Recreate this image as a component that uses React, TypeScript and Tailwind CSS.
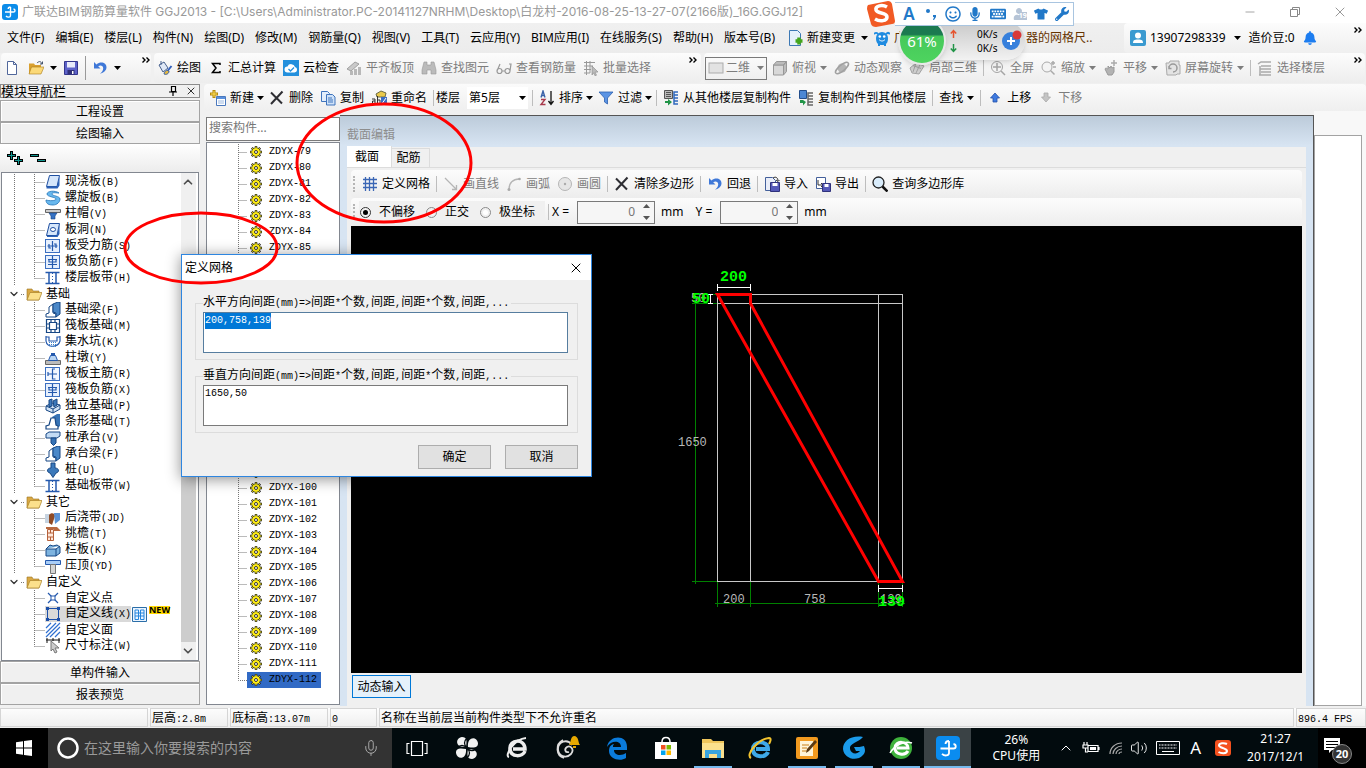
import React, { useEffect, useRef, useState } from 'react'
import type { ReactNode } from 'react'
import { clsx } from 'clsx'
import { Minus, X, ChevronDown, ChevronUp, Volume2, Mic } from 'lucide-react'
import { FaTshirt, FaWrench, FaMicrophone, FaRegSmile, FaUser, FaBell, FaKeyboard } from 'react-icons/fa'

const ICONS: Record<string, ReactNode> = {
  /* main toolbar */
  app: <><rect width="16" height="16" rx="3" fill="#0b8ce9" /><path d="M8.500 3v8.500c0 2-3 2.200-4.500.5M8.500 3C7 3 6.200 4 6.200 5M3 8h8.500c2 0 2-2.600 0-3" fill="none" stroke="#fff" strokeWidth="1.400" /></>,
  file: <path d="M3.500 1.500h6l3 3v10h-9zM9.500 1.500v3h3" fill="#fff" stroke="#51679b" />,
  open: <><path d="M1 3.500h5l1 1.500h6v9H1z" fill="#d9a02f" /><path d="M3.500 7H16l-3 7H1z" fill="#fbd978" stroke="#a97b18" strokeWidth=".6" /><path d="M9 3c2-2 4-2 5 1M14.500 1.500V4H12" fill="none" stroke="#44536b" /></>,
  save: <><path d="M1.500 1.500h13v13h-13z" fill="#5d62c9" stroke="#34368c" /><path d="M4 2h8v5.500H4z" fill="#e8ebfa" /><path d="M4.500 10h7v4.500h-7z" fill="#303078" /><path d="M9 11h1.500v3H9z" fill="#fff" /></>,
  undo: <path d="M2 2v6.500h6.500L6.200 6.200c2-1.500 5-.8 5 2 0 2.200-1.200 3.800-3.200 5.500 4-1 6.500-3.400 6.500-6.400C14.500 2.500 8.500 1 4.500 4.500z" fill="#3f78d8" />,
  draw: <><path d="m2 5 5-3 4 6-5 4z" fill="#dfe8f6" stroke="#47618e" /><path d="M4 1v4" stroke="#47618e" /><path d="m14.500 6-4 5" stroke="#315fbb" strokeWidth="2" /><path d="M7 14c1-4 3-4 5-3 0 3-3 4-5 3" fill="#e6b83e" stroke="#3e639f" /></>,
  sum: <path d="M12 5V3.500H4.500L8 8l-3.500 4.500H12V11" fill="none" stroke="#000" strokeWidth="1.500" />,
  cloud: <><rect width="16" height="16" fill="#2390dd" /><path d="M4.500 12.500a3 3 0 0 1 0-6 4 4 0 0 1 7.500.5 2.800 2.800 0 0 1-.5 5.500z" fill="#fff" /><path d="m5.500 9 2 2 3.500-3.500" fill="none" stroke="#2390dd" strokeWidth="1.300" /></>,
  align: <><path d="m1 9 8-7 4 2-8 7z" fill="#c9c9c9" stroke="#a0a0a0" /><path d="M4 11h3v4H4zM8 9h3v6H8zM12 7h3v8h-3z" fill="#b8b8b8" /></>,
  binoc: <path d="M3 2h3v3h4V2h3l2 8v4h-5v-4H6v4H1v-4z" fill="#bbb" stroke="#999" strokeWidth=".6" />,
  glasses: <path d="M1 11a2.500 2.500 0 1 0 5 0 2.500 2.500 0 1 0-5 0l3-7M9 11a2.500 2.500 0 1 0 5 0 2.500 2.500 0 1 0-5 0H6M14 11l1-7h-2" fill="none" stroke="#999" strokeWidth="1.200" />,
  batch: <><path d="M1 2.500h11M1 6h9M1 9.500h7M1 13h6M3.500 1v14M7 1v12" stroke="#999" /><path d="m9 6 6 6-3 .2 1.500 3-1.500.6-1.500-3L9 15z" fill="#bbb" stroke="#888" strokeWidth=".6" /></>,
  flat: <rect x="1" y="3" width="14" height="10" fill="#e2e2e2" stroke="#ababab" />,
  cube: <><path d="M1.500 5h10v10h-10z" fill="#d8d8d8" stroke="#989898" /><path d="m1.500 5 3-3.500h10L11.500 5zM14.500 1.500v10l-3 3.500V5z" fill="#bcbcbc" stroke="#989898" /></>,
  orbit: <><circle cx="8" cy="8" r="4.500" fill="#b5b5b5" /><ellipse cx="8" cy="8" rx="8" ry="3" transform="rotate(-40 8 8)" fill="none" stroke="#a0a0a0" strokeWidth="1.500" /></>,
  part3d: <path d="m1 8 6-5 8 3-5 8-7-1zM4 5.500l8 3M7 3l-3 9M11 4.500 7 13" fill="#d0d0d0" stroke="#a3a3a3" />,
  full: <><circle cx="7" cy="7" r="5.500" fill="#f4f4f4" stroke="#a5a5a5" /><path d="M7 3v8M3 7h8m0 4 4 4" stroke="#a5a5a5" strokeWidth="1.500" /></>,
  zoom: <><circle cx="6" cy="7" r="5" fill="#f4f4f4" stroke="#aaa" /><path d="m9.500 10.500 4 4M12 1v4m-2-2h4M12 7h3" stroke="#aaa" strokeWidth="1.500" /></>,
  pan: <><path d="M2 9c1-2 2 0 3 0V6l2 2 1-2 1 2 2-1v5l-2 3H5z" fill="#b3b3b3" stroke="#999" /><path d="M11 0v6M8 3h6" stroke="#aaa" strokeWidth="1.500" /></>,
  spin: <><path d="M1 3h3l1-2h9v4h1v9h-3l-1 1H2z" fill="#e3e3e3" stroke="#aaa" /><path d="M4 8a4 4 0 1 1 4 4m-4-6v2.500h2.500" fill="none" stroke="#999" strokeWidth="1.500" /></>,
  floors: <path d="m1 4 3-2h10M4 6h10M3 9h11M4 12h10M2 15h12M3 6v9" fill="none" stroke="#aaa" strokeWidth="1.500" />,
  change: <><path d="M2.500 .5h8l3 3v12h-11z" fill="#e5f1fb" stroke="#3c78b4" /><path d="M12 7.500v7M8.500 11h7" stroke="#43a51c" strokeWidth="3.500" /></>,
  mascot: <><path d="M2 8a6 6 0 0 1 12 0c0 5-2 7-6 7S2 13 2 8" fill="#1f8be0" /><path d="M0 4c2-2 3-1 4 0M16 4c-2-2-3-1-4 0M5 14v2M11 14v2" stroke="#1f8be0" strokeWidth="2" fill="none" /><circle cx="5.800" cy="6.500" r="1.300" fill="#fff" /><circle cx="10.200" cy="6.500" r="1.300" fill="#fff" /><path d="M5 9.500c2 2 4 2 6 0" stroke="#fff" fill="none" /></>,
  account: <><rect width="16" height="16" rx="2" fill="#3a9ad0" /><path d="M8 9.500c-4 0-5 1-5 3.500h10c0-2.500-1-3.500-5-3.500" fill="#fff" /><circle cx="8" cy="5.500" r="3" fill="#fff" /></>,
  /* component toolbar */
  create: <><path d="M6.500 6.500h9v9h-9z" fill="#fff" stroke="#4a78bd" /><path d="M7 7h8v2H7z" fill="#5b91dd" /><path d="M8 11h6M8 13h6" stroke="#9ab8e0" /><path d="M4 0v8M0 4h8" stroke="#b58b10" strokeWidth="3" /><path d="M4 1v6M1 4h6" stroke="#ffe15a" /></>,
  remove: <path d="m2 2.500 11 11M13.500 1.500 2 14" stroke="#2e2e33" strokeWidth="2" />,
  copy: <><path d="M1.500 1.500h6l2 2v8h-8z" fill="#e3eefb" stroke="#3f74bd" /><path d="M6.500 4.500h6l2.500 2.500v8H6.500zM8 8h4M8 10h5M8 12h5" fill="#cfe2f8" stroke="#3f74bd" /></>,
  rename: <><path d="m5 4 5-3 5 2-1 4H6z" fill="#e9c94c" stroke="#6c6a45" /><path d="M1 9h3v5H1.500v-3H4M6.500 6v8h2.500v-4H6.500" fill="none" stroke="#333" /><path d="M10 7h6v8h-6z" fill="#3b6cc4" /><path d="m10 15 5-7" stroke="#fff" /></>,
  sort: <><path d="M2 7.500 4 1l2 6.500M2.500 5.500h3" fill="none" stroke="#3a62a8" strokeWidth="1.400" /><path d="M2 9.500h4L2 14.500h4.500" fill="none" stroke="#a83a4c" strokeWidth="1.400" /><path d="M12 1v13m-2.500-3 2.500 3.500 2.500-3.500" fill="none" stroke="#111" strokeWidth="1.300" /></>,
  filter: <path d="M1 2h14l-5.500 6v6l-3-2V8z" fill="#5b94e4" stroke="#2c5fae" strokeWidth=".8" />,
  fromFloor: <><path d="M1.500 .5h8v8h-8zM3 2.500h5M3 4.500h5M3 6.500h5" fill="#bbb" stroke="#555" /><path d="M15 2h-4v12h4M11 5h4M11 8h4M11 11h4" fill="none" stroke="#2f68bd" strokeWidth="1.500" /><path d="M2 11h3V9l4 3-4 3.500V13H2z" fill="#219447" /></>,
  toFloor: <><path d="M1.500 .5h7v8h-7z" fill="#4c87d4" stroke="#234e8c" /><path d="M15 3h-5v12h5M10 6h5M10 9h5M10 12h5" fill="none" stroke="#666" strokeWidth="1.500" /><path d="M2 10h3l3 2-3 3.500V13H2z" fill="#219447" /></>,
  up: <path d="m8 3 4.500 5H10v4H6V8H3.500z" fill="#3f7be0" stroke="#2350a8" strokeWidth=".8" />,
  down: <path d="m8 12 4.500-5H10V3H6v4H3.500z" fill="#c4c4c4" stroke="#aaa" strokeWidth=".8" />,
  /* section editor */
  grid: <path d="M3.500 1v14M7.500 1v14M11.500 1v14M1 3.500h14M1 7.500h14M1 11.500h14" stroke="#3a66b5" strokeWidth="1.300" />,
  line: <path d="m2 2 11 11M13.500 9v4.500H9" fill="none" stroke="#b5b5b5" strokeWidth="1.300" />,
  arc: <><path d="M3 13C3 7 7 3 13 3" fill="none" stroke="#b5b5b5" strokeWidth="1.300" /><circle cx="3" cy="13.500" r="1.500" fill="#aaa" /><circle cx="13.500" cy="3" r="1.300" fill="#aaa" /></>,
  circle: <><circle cx="8" cy="8" r="6.500" fill="#e6e6e6" stroke="#b5b5b5" /><circle cx="8" cy="8" r="1.200" fill="#aaa" /></>,
  import: <><path d="M1.500 1.500h7l3 3v10h-10z" fill="#e9edf8" stroke="#44609b" /><path d="M6.500 6.500h9v9h-9z" fill="#5559b8" stroke="#30327c" /><path d="M8.500 7h5v3h-5z" fill="#fff" /><path d="M9 2c3-2 5 0 5 3m-2-1 2 1.500L15.500 4" fill="none" stroke="#333" /></>,
  export: <><path d="M1.500 1.500h9v11h-9z" fill="#fff" stroke="#44609b" /><path d="M3 4v5h5m-2-2 2 2-2 2" fill="none" stroke="#333" /><path d="M7.500 7.500h8v8h-8z" fill="#5559b8" stroke="#30327c" /><path d="M9.500 8h4v3h-4z" fill="#fff" /></>,
  search: <><circle cx="6.500" cy="6.500" r="5.500" fill="#d9ecfb" stroke="#222" strokeWidth="1.300" /><path d="m10.500 10.500 5 5" stroke="#111" strokeWidth="2.500" /></>,
  /* navigation tree */
  folder: <><path d="M1 3h5l1 2h6v9H1z" fill="#d9a844" stroke="#9c7420" strokeWidth=".6" /><path d="M4 6.500h12l-3 7.500H1z" fill="#fbe08c" stroke="#a98128" strokeWidth=".7" /></>,
  slab: <><path d="M4.500 1.500h10l-2.500 11H1.500z" fill="#d5e6fb" stroke="#1f4fa0" /><path d="M1.500 12.500h10.500l2.500-10v9l-2 3h-11z" fill="#2c62b8" /></>,
  spiral: <path d="M14 3C10 0 2 1 2 4s9 3 9 5-7 2-10 1c0 4 3 5 7 5s7-3 7-6-8-3-8-5 4-1 7-1z" fill="#68b8ee" stroke="#2374b8" strokeWidth=".8" />,
  cap: <><path d="M.5 3.500h15v3H.5z" fill="#ccc" stroke="#666" /><path d="M4 7h8l-2 3v3H6v-3z" fill="#3572c4" stroke="#1a4585" strokeWidth=".6" /></>,
  hole: <><path d="M4.500 1.500h10l-2.500 12H1.500z" fill="#d5e6fb" stroke="#1f4fa0" /><ellipse cx="8" cy="7.500" rx="2.500" ry="2" fill="#fff" stroke="#1f4fa0" /><path d="m2 14 10-.5 2.500-11V12l-2 3H2z" fill="#2c62b8" /></>,
  rebar: <><rect x=".5" y="1.500" width="14" height="13" fill="#e7f0fd" stroke="#3c6fc0" /><path d="M7.500 3v10M2.500 8h10M4 6v4h2M11 10V6H9" fill="none" stroke="#2459ad" strokeWidth="1.200" /></>,
  negbar: <><rect x=".5" y="1.500" width="14" height="13" fill="#e7f0fd" stroke="#3c6fc0" /><path d="M7.500 2v12M3 5.500h9M3 10.500h9M4 5v3h7V5" fill="none" stroke="#2459ad" strokeWidth="1.200" /></>,
  band: <><path d="M.5 2.500h14M.5 13.500h14M4 3v10M11 3v10" stroke="#2459ad" strokeWidth="1.500" /><path d="M7.500 3v10" stroke="#2459ad" strokeDasharray="1 2" /></>,
  beam: <><path d="M1 15v-3l3-1V5l4-3v9l3 1v3z" fill="#fff" stroke="#174784" /><path d="m8 2 5-2h2v12l-4 3v-4l-3-1z" fill="#4b88c8" stroke="#174784" /></>,
  raft: <path d="M1.500 1.500h13v13h-13zM4.500 4.500h7v7h-7zM1 6h3M1 10h3M12 6h3M12 10h3M6 1v3M10 1v3M6 12v3M10 12v3" fill="none" stroke="#174784" strokeWidth="1.200" />,
  pit: <><path d="M1 2v5c1 7 12 7 14 0V2M1 3h3v4h8V3h3" fill="none" stroke="#2459ad" strokeWidth="1.200" /><path d="M4 8.500h8M4 10.500h8M6 12.500h5" stroke="#3b82cb" strokeDasharray="1 1" /></>,
  pier: <><path d="M.5 10.500h15v4H.5z" fill="#bbb" stroke="#666" /><path d="M5.500 5.500h5l2 5h-9z" fill="#b9d5f3" stroke="#2459ad" /><path d="M6 3h4v2H6z" fill="#2459ad" /></>,
  mainbar: <><rect x=".5" y="1.500" width="14" height="13" fill="#f2f7ff" stroke="#3c6fc0" /><path d="M7.500 3v10h3M3 8h9M3 6v4M7 3h3" fill="none" stroke="#2459ad" strokeWidth="1.200" /></>,
  isolated: <><path d="m1 8 6-3 8 2v4l-7 4-7-3z" fill="#cfe1f4" stroke="#174784" /><path d="m4 2 3-1v7l-3 1zM8 3l4-2v6L9 9z" fill="#3c79bb" stroke="#174784" /><path d="m1 8 7 3 7-4M8 11v4" fill="none" stroke="#174784" /></>,
  strip: <><path d="M7 3 12 0h3v12l-4 3z" fill="#3773b5" /><path d="M1 15v-3l3-1 2-7h4l1 7 2 1v3z" fill="#fff" stroke="#174784" strokeWidth="1.200" /></>,
  pilecap: <><path d="m1 4 3-2h11v4l-3 2H1z" fill="#c3dbf4" stroke="#174784" /><path d="M6 8h5v5l-2.500 2.500L6 13z" fill="#3773b5" stroke="#174784" /></>,
  pile: <path d="M6 1h4v5c4 0 5 4 1 5l-3 4.500L5 11C1 10 2 6 6 6z" fill="#3b78ba" stroke="#174784" />,
  postcast: <><path d="M0 4h5v9H0z" fill="#c6d3e0" /><path d="M4 5c2-3 6-2 6 1l-3 9-3-2z" fill="#8f4a24" /><path d="M9 3h6v7l-5 4z" fill="#5b92d4" /></>,
  eave: <><path d="M2.500 3.500h6v11h-6zM2 7h7M2 11h7M5.500 3v4M5.500 11v4" fill="#ffe8da" stroke="#b5603a" /><path d="M1 1h11l4 4H9V3H1z" fill="#b9693f" /></>,
  parapet: <path d="m1 7 4-4 3 1 4-1 3 2v6l-4 3H1z M1 7h10l4-3M11 7v7" fill="#7db3df" stroke="#174784" />,
  coping: <><path d="M.5 2.500h15v4H.5z" fill="#a9cdf7" stroke="#2459ad" /><path d="M5.500 6.500h5v9h-5z" fill="#d5d5d5" stroke="#777" /></>,
  point: <><path d="m3 3 10 10M13 3 3 13" stroke="#2459ad" strokeWidth="1.200" /><rect x="6" y="6" width="4" height="4" fill="#fff" stroke="#2459ad" /></>,
  polyline: <><path d="M2.500 2.500h11v11h-11z" fill="none" stroke="#1c4fa8" /><path d="M1 1h3v3H1zM12 1h3v3h-3zM1 12h3v3H1zM12 12h3v3h-3z" fill="#1c4fa8" /></>,
  face: <path d="m1 6 5-5M1 11 11 1M1 15 15 1M5 15 15 5M10 15l5-5" stroke="#2f6fd0" strokeWidth="1.200" />,
  dimension: <><path d="M1 2h14M2 0v5M8 0v3M14 0v5" stroke="#111" /><path d="m6 3 8 7h-4l2 4-2 1-2-4-2 2z" fill="#ccc" stroke="#777" /></>,
  gear: <><path d="M8 2v12M2 8h12M3.800 3.800l8.400 8.400M12.200 3.800l-8.400 8.400" stroke="#222" strokeWidth="2.400" /><circle cx="8" cy="8" r="4.200" fill="#ffee10" stroke="#333" strokeWidth=".7" /><path d="M8 2.500v11M2.500 8h11M4.200 4.200l7.600 7.600M11.800 4.200l-7.600 7.600" stroke="#ffee10" /><circle cx="8" cy="8" r="1.500" fill="#fff" stroke="#222" strokeWidth=".9" /></>,
}

const Icon = ({ name, className = 'size-4' }: { name: string; className?: string }) => (
  <svg viewBox="0 0 16 16" className={clsx('shrink-0', className)} aria-hidden="true">{ICONS[name]}</svg>
)

const Arrow = ({ className }: { className?: string }) => (
  <svg viewBox="0 0 7 4" className={clsx('h-1 w-[7px] shrink-0', className)} aria-hidden="true"><path d="M0 0h7L3.500 4z" fill="currentColor" /></svg>
)

const Sep = () => <span className="-mx-px h-4 w-px shrink-0 bg-[#bdbdbd]" />

const Grip = () => <span className="h-4 w-0.5 shrink-0 border-l-2 border-dotted border-[#b5b5b5]" />

// Latin runs are half as wide as a full-width glyph
const Song = ({ text }: { text: string }) => (
  <>
    {text.split(/([\x20-\x7e]+)/).filter(Boolean).map((part, i) => (
      <span key={i} className={/^[\x20-\x7e]/.test(part) ? "font-['Liberation_Mono',monospace] text-[10px]" : undefined}>{part}</span>
    ))}
  </>
)

type ToolProps = { icon?: string; label: string; disabled?: boolean; arrow?: boolean; tight?: boolean }

const Tool = ({ icon, label, disabled, arrow, tight }: ToolProps) => (
  <button type="button" disabled={disabled} className={clsx('flex shrink-0 items-center gap-1 whitespace-nowrap', disabled && 'text-[#7d7d7d]')}>
    {icon && <Icon name={icon} />}
    {label}
    {arrow && <Arrow className={clsx(tight && '-mr-0.5 -ml-px')} />}
  </button>
)

const More = ({ className }: { className?: string }) => (
  <button type="button" aria-label="更多" className={clsx('shrink-0 self-start pt-1', className)}>
    <svg viewBox="0 0 8 6" className="h-1.5 w-2"><path d="m.5 .5 2.500 2.500L.5 5.500M4.500 .5 7 3 4.500 5.500" fill="none" stroke="#000" strokeWidth="1.400" /></svg>
  </button>
)

const MENUS = ['文件(F)', '编辑(E)', '楼层(L)', '构件(N)', '绘图(D)', '修改(M)', '钢筋量(Q)', '视图(V)', '工具(T)', '云应用(Y)', 'BIM应用(I)', '在线服务(S)', '帮助(H)', '版本号(B)']

const TitleBar = () => (
  <header className="flex h-[23px] items-center bg-white pr-1 pl-0.5 text-[#999]">
    <Icon name="app" />
    <h1 className="ml-1 font-[Inter,'Noto_Sans_CJK_SC',sans-serif] whitespace-nowrap">广联达BIM钢筋算量软件 GGJ2013 - [C:\Users\Administrator.PC-20141127NRHM\Desktop\白龙村-2016-08-25-13-27-07(2166版)_16G.GGJ12]</h1>
    <div className="ml-auto flex">
      <button type="button" aria-label="最小化" className="flex w-[45px] items-center justify-center"><Minus className="size-3.5" strokeWidth={1.5} /></button>
      <button type="button" aria-label="还原" className="flex w-[45px] items-center justify-center">
        <svg viewBox="0 0 12 12" className="size-3"><path d="M1.500 3.500h7v7h-7zM3.500 3V1.500h7v7H9" fill="none" stroke="#888" /></svg>
      </button>
      <button type="button" aria-label="关闭" className="flex w-[45px] items-center justify-center"><X className="size-4" strokeWidth={1.5} /></button>
    </div>
  </header>
)

const MenuBar = () => (
  <nav className="flex h-[30px] items-center bg-gradient-to-b from-[#f0f0f0] to-[#ececec]">
    <div className="flex items-center gap-[11px] pl-[7px]">
      {MENUS.map((m) => <button key={m} type="button" className="whitespace-nowrap">{m}</button>)}
    </div>
    <div className="ml-3 flex items-center gap-1 whitespace-nowrap">
      <Icon name="change" />
      <button type="button" className="flex items-center gap-1.5">新建变更 <Arrow /></button>
    </div>
    <a href="#news" className="ml-1.5 flex items-center whitespace-nowrap text-[#663300]">
      <Icon name="mascot" />
      <span className="ml-1 w-[132px]">广</span>
      <span>器的网格尺..</span>
    </a>
    <div className="ml-auto flex h-full w-[242px] shrink-0 items-center rounded-l bg-gradient-to-b from-[#fcfcfc] to-[#efefef] pl-1.5">
      <Icon name="account" />
      <button type="button" className="ml-1 flex items-center gap-2">13907298339 <Arrow /></button>
      <span className="ml-2">造价豆:0</span>
      <button type="button" aria-label="通知" className="ml-2"><FaBell className="size-3.5 text-[#1d7df0]" /></button>
      <More className="mr-1 ml-auto" />
    </div>
  </nav>
)

const MainToolbar = () => (
  <div className="flex h-[30px] gap-[3px] px-px text-black">
    <div className="flex w-[150px] shrink-0 items-center rounded bg-gradient-to-b from-[#fcfcfc] to-[#ededed] pl-[3px]">
      <button type="button" aria-label="新建"><Icon name="file" /></button>
      <button type="button" aria-label="打开" className="ml-2 flex items-center gap-1.5"><Icon name="open" /><Arrow /></button>
      <button type="button" aria-label="保存" className="ml-1.5"><Icon name="save" /></button>
      <span className="mx-1.5 h-6 w-px bg-[#999]" />
      <button type="button" aria-label="撤销" className="flex items-center gap-1.5"><Icon name="undo" /><Arrow /></button>
      <More className="mr-px ml-auto" />
    </div>
    <div className="flex w-[547px] shrink-0 items-center gap-[7px] rounded bg-gradient-to-b from-[#fcfcfc] to-[#ededed] pl-[3px]">
      <Tool icon="draw" label="绘图" />
      <Tool icon="sum" label="汇总计算" />
      <Tool icon="cloud" label="云检查" />
      <Tool icon="align" label="平齐板顶" disabled />
      <Tool icon="binoc" label="查找图元" disabled />
      <Tool icon="glasses" label="查看钢筋量" disabled />
      <Tool icon="batch" label="批量选择" disabled />
      <More className="mr-1 ml-auto" />
    </div>
    <div className="flex min-w-0 grow items-center gap-[7px] rounded bg-gradient-to-b from-[#fcfcfc] to-[#ededed] pl-px">
      <label className="-mr-0.5 flex h-[23px] w-[62px] shrink-0 items-center border border-[#7a7a7a] px-0.5 text-[#7d7d7d]">
        <Icon name="flat" />
        <select aria-label="视图模式" disabled className="ml-0.5 w-7 appearance-none opacity-100"><option>二维</option></select>
        <Arrow className="ml-auto" />
      </label>
      <Tool icon="cube" label="俯视" disabled arrow />
      <Tool icon="orbit" label="动态观察" disabled />
      <Tool icon="part3d" label="局部三维" disabled />
      <Sep />
      <Tool icon="full" label="全屏" disabled />
      <Tool icon="zoom" label="缩放" disabled arrow />
      <Tool icon="pan" label="平移" disabled arrow />
      <Tool icon="spin" label="屏幕旋转" disabled arrow />
      <Sep />
      <Tool icon="floors" label="选择楼层" disabled />
      <More className="mr-[3px] ml-auto" />
    </div>
  </div>
)

const ComponentToolbar = () => (
  <div className="flex h-[27px] items-center gap-[7px] rounded bg-gradient-to-b from-[#fbfbfb] to-[#efefef] pl-1.5">
    <Tool icon="create" label="新建" arrow tight />
    <Tool icon="remove" label="删除" />
    <Tool icon="copy" label="复制" />
    <Tool icon="rename" label="重命名" />
    <Sep />
    <label htmlFor="floor" className="-ml-1 shrink-0">楼层</label>
    <div className="-mr-0.5 flex h-[22px] w-[61px] shrink-0 items-center bg-white px-0.5">
      <select id="floor" className="w-12 appearance-none"><option>第5层</option></select>
      <Arrow className="ml-auto" />
    </div>
    <Sep />
    <Tool icon="sort" label="排序" arrow tight />
    <Tool icon="filter" label="过滤" arrow tight />
    <Sep />
    <Tool icon="fromFloor" label="从其他楼层复制构件" />
    <Tool icon="toFloor" label="复制构件到其他楼层" />
    <Sep />
    <Tool label="查找" arrow />
    <Sep />
    <Tool icon="up" label="上移" />
    <Tool icon="down" label="下移" disabled />
  </div>
)

const TREE: { title?: string; items: [string, string][] }[] = [
  { items: [['slab', '现浇板(B)'], ['spiral', '螺旋板(B)'], ['cap', '柱帽(V)'], ['hole', '板洞(N)'], ['rebar', '板受力筋(S)'], ['negbar', '板负筋(F)'], ['band', '楼层板带(H)']] },
  { title: '基础', items: [['beam', '基础梁(F)'], ['raft', '筏板基础(M)'], ['pit', '集水坑(K)'], ['pier', '柱墩(Y)'], ['mainbar', '筏板主筋(R)'], ['negbar', '筏板负筋(X)'], ['isolated', '独立基础(P)'], ['strip', '条形基础(T)'], ['pilecap', '桩承台(V)'], ['beam', '承台梁(F)'], ['pile', '桩(U)'], ['band', '基础板带(W)']] },
  { title: '其它', items: [['postcast', '后浇带(JD)'], ['eave', '挑檐(T)'], ['parapet', '栏板(K)'], ['coping', '压顶(YD)']] },
  { title: '自定义', items: [['point', '自定义点'], ['polyline', '自定义线(X)'], ['face', '自定义面'], ['dimension', '尺寸标注(W)']] },
]

const PanelButton = ({ label }: { label: string }) => (
  <button type="button" className="h-[22px] w-full border border-[#a3a3a3] bg-[#f0f0f0] pt-0.5 leading-4 shadow-[inset_1px_1px_0_#fff]">{label}</button>
)

const Navigator = () => (
  <aside className="flex w-[200px] shrink-0 flex-col pb-px">
    <div className="mb-0.5 flex h-3.5 items-center border border-[#8b8b8b] text-[13px] leading-3">
      <h2>模块导航栏</h2>
      <button type="button" aria-label="固定" className="ml-auto">
        <svg viewBox="0 0 8 10" className="h-2.5 w-2"><path d="M2.500 .5h4v5h-4zM0 6h8M4 6v4" fill="none" stroke="#000" strokeWidth="1.200" /></svg>
      </button>
      <button type="button" aria-label="关闭" className="mr-0.5 ml-2"><X className="size-3" strokeWidth={1.6} /></button>
    </div>
    <PanelButton label="工程设置" />
    <PanelButton label="绘图输入" />
    <div className="flex h-7 items-center bg-gradient-to-b from-white to-[#ececec] pl-[7px]">
      <button type="button" aria-label="全部展开">
        <svg viewBox="0 0 16 14" className="h-3.5 w-4"><path d="M4.500 0v9M0 4.500h9M11.500 5v9M7 9.500h9" stroke="#000" strokeWidth="3" /><path d="M4.500 1v7M1 4.500h7M11.500 6v7M8 9.500h7" stroke="#11958f" /></svg>
      </button>
      <button type="button" aria-label="全部折叠" className="ml-[7px]">
        <svg viewBox="0 0 16 14" className="h-3.5 w-4"><path d="M0 4.500h9M7 9.500h9" stroke="#000" strokeWidth="3" /><path d="M1 4.500h7M8 9.500h7" stroke="#11958f" /></svg>
      </button>
    </div>
    <div className="mx-px flex grow border border-[#828790] bg-white">
      <ul className="grow pt-px">
        {TREE.map((group, g) => (
          <React.Fragment key={g}>
            {group.title && (
              <li className="flex h-4 items-center pl-1.5 leading-4">
                <ChevronDown className="size-3 text-[#333]" strokeWidth={2.5} />
                <span className="mr-0.5 ml-px w-[3px] border-t border-dotted border-[#777]" />
                <Icon name="folder" />
                <span className="ml-1">{group.title}</span>
              </li>
            )}
            {group.items.map(([icon, label], i) => (
              <li key={label} className="flex h-4 items-center leading-4">
                <svg viewBox="0 0 43 16" className="h-4 w-[43px] shrink-0" aria-hidden="true">
                  <path
                    d={clsx(g < TREE.length - 1 && 'M12.500 0V16', i < group.items.length - 1 ? 'M32.500 0V16' : 'M32.500 0V8.500', 'M32.500 8.500H43')}
                    fill="none" stroke="#777" strokeDasharray="1 1"
                  />
                </svg>
                <span className={clsx('flex h-4 items-center whitespace-nowrap', label === '自定义线(X)' && 'bg-[#d9d9d9]')}>
                  <Icon name={icon} />
                  <span className="ml-1"><Song text={label} /></span>
                </span>
                {label === '自定义线(X)' && (
                  <>
                    <svg viewBox="0 0 15 15" className="ml-px size-[15px]" aria-hidden="true"><path d="M.5 .5h14v14H.5z" fill="#eaf4ff" stroke="#2b6ea8" /><path d="M3 3h3.500v9.500H3zM8.500 3H12v9.500H8.500zM3 6h9M3 9h9" fill="none" stroke="#2585dd" /></svg>
                    <span className="ml-0.5 self-start bg-[#ffd800] text-[9px] leading-2 font-bold">NEW</span>
                  </>
                )}
              </li>
            ))}
          </React.Fragment>
        ))}
      </ul>
      <div className="mr-0.5 flex w-[15px] shrink-0 flex-col bg-[#f0f0f0] text-[#505050]">
        <ChevronUp className="mt-0.5 size-3.5" strokeWidth={3} />
        <span className="mt-24 grow bg-[#cdcdcd]" />
        <ChevronDown className="my-0.5 size-3.5" strokeWidth={3} />
      </div>
    </div>
    <PanelButton label="单构件输入" />
    <PanelButton label="报表预览" />
  </aside>
)

const COMPONENTS = Array.from({ length: 34 }, (_, i) => `ZDYX-${79 + i}`)

const ComponentList = () => (
  <div className="flex w-[134px] shrink-0 flex-col pt-1.5 pb-px">
    <input aria-label="搜索构件" placeholder="搜索构件..." className="h-6 w-full border border-[#7a7a7a] bg-white px-0.5 pb-1 placeholder:text-[#777]" />
    <ul className="mt-px grow border border-[#828790] bg-white pt-px font-['Liberation_Mono',monospace] text-[10px]">
      {COMPONENTS.map((name, i) => (
        <li key={name} className="flex h-4 items-center pl-[31px] leading-4">
          <svg viewBox="0 0 9 16" className="h-4 w-[9px]" aria-hidden="true">
            <path d={i < COMPONENTS.length - 1 ? 'M.5 0V16M.5 8.500H9' : 'M.5 0V8.500H9'} fill="none" stroke="#777" strokeDasharray="1 1" />
          </svg>
          <span className={clsx('flex h-4 items-center gap-[5px] pr-1 pl-px', name === 'ZDYX-112' && 'bg-[#316ac5]')}>
            <Icon name="gear" />
            {name}
          </span>
        </li>
      ))}
    </ul>
  </div>
)

const Offset = ({ axis }: { axis: string }) => {
  const [value, setValue] = useState(0)
  return (
    <div className="flex items-center">
      <label htmlFor={`offset-${axis}`} className="mr-2 whitespace-pre">{axis} =</label>
      <div className="flex h-[23px] w-[78px] items-center border border-[#7a7a7a] bg-[#f6f6f6] pr-1">
        <input id={`offset-${axis}`} value={value} onChange={(e) => setValue(Number(e.target.value) || 0)} className="w-full min-w-0 pr-2 text-right text-[#777]" />
        <div className="flex flex-col gap-2 text-[#555]">
          <button type="button" aria-label="增加" onClick={() => setValue(value + 1)} className="flex"><Arrow className="w-[5px] rotate-180" /></button>
          <button type="button" aria-label="减少" onClick={() => setValue(value - 1)} className="flex"><Arrow className="w-[5px]" /></button>
        </div>
      </div>
      <span className="ml-1.5">mm</span>
    </div>
  )
}

const SectionDrawing = () => (
  <svg viewBox="0 0 951 447" className="min-h-0 w-full grow basis-0 bg-black" role="img" aria-label="截面图">
    <g fill="none" shapeRendering="crispEdges">
      <path d="M366.500 68.500h185v287h-185zM399.500 68v287M527.500 68v287M366 77.500h185" stroke="#c8c8c8" />
      <path d="M344.500 68v290M341 68.500h25M341 77.500h25M341 355.500h25M366.500 356v25M399.500 356v25M527.500 356v25M551.500 356v25M364 377.500h190" stroke="#008000" />
      <path d="M366 61.500h33M366.500 58v7M399.500 58v7M527 362.500h24M527.500 359v7M551.500 359v7M359.500 68v10M357 68.500h5M357 77.500h5" stroke="#fff" />
    </g>
    <g fill="#b8b8b8" fontFamily="Liberation Mono, monospace" fontSize="12">
      <text x="327" y="220">1650</text>
      <text x="340" y="76">50</text>
      <text x="372" y="377">200</text>
      <text x="453" y="377">758</text>
      <text x="529" y="377">139</text>
    </g>
    <path d="M366.500 68.500h33v9l152 278h-24z" fill="none" stroke="#f00" strokeWidth="3" />
    <g fill="#0f0" fontFamily="Liberation Mono, monospace" fontSize="15" fontWeight="bold">
      <text x="369" y="55">200</text>
      <text x="341" y="77">50</text>
      <text x="527" y="380">139</text>
    </g>
  </svg>
)

const SectionEditor = () => (
  <section className="mt-1 flex min-w-0 grow flex-col border-t border-r border-[#555] bg-gradient-to-b from-[#bccbda] via-[#d7e4f2] via-5% to-[#d7e4f2] px-[7px]">
    <h2 className="flex h-[31px] items-center pt-1.5 text-[#8d8d8d]">截面编辑</h2>
    <div className="flex grow flex-col bg-[#f0f0f0]">
      <div role="tablist" className="flex h-[21px] items-end border-b border-[#dcdcdc]">
        <button type="button" role="tab" aria-selected="true" className="h-[21px] w-[45px] border-r border-[#dcdcdc] bg-white pr-1">截面</button>
        <button type="button" role="tab" aria-selected="false" className="h-[19px] w-[38px] border-t border-r border-[#dcdcdc] pr-1">配筋</button>
      </div>
      <div className="mt-0.5 flex grow flex-col pr-1 pl-1">
        <div className="flex h-7 items-center gap-[7px] rounded bg-gradient-to-b from-[#fcfcfc] to-[#ededed] pl-0.5">
          <Grip />
          <Tool icon="grid" label="定义网格" />
          <Sep />
          <Tool icon="line" label="画直线" disabled />
          <Tool icon="arc" label="画弧" disabled />
          <Tool icon="circle" label="画圆" disabled />
          <Sep />
          <Tool icon="remove" label="清除多边形" />
          <Sep />
          <Tool icon="undo" label="回退" />
          <Sep />
          <Tool icon="import" label="导入" />
          <Tool icon="export" label="导出" />
          <Sep />
          <Tool icon="search" label="查询多边形库" />
        </div>
        <div className="flex h-7 items-center gap-1 rounded bg-gradient-to-b from-[#fcfcfc] to-[#ededed] pl-0.5">
          <Grip />
          <div className="flex h-[22px] items-center gap-2.5 bg-[#f0f0f0] pr-2.5">
            {['不偏移', '正交', '极坐标'].map((label) => (
              <label key={label} className="flex items-center gap-[7px]">
                <input type="radio" name="offset" defaultChecked={label === '不偏移'} className="mx-px size-[11px] appearance-none rounded-full border border-[#8a8a8a] bg-white bg-clip-content p-0.5 checked:border-[#333] checked:bg-black" />
                {label}
              </label>
            ))}
          </div>
          <Sep />
          <div className="flex gap-3">
            <Offset axis="X" />
            <Offset axis="Y" />
          </div>
        </div>
        <SectionDrawing />
        <div className="flex h-[33px] items-start pt-0.5 pl-px">
          <button type="button" className="h-[23px] w-[59px] border border-[#0078d7] bg-[#e5f1fb]">动态输入</button>
        </div>
      </div>
    </div>
  </section>
)

const Spacing = ({ id, label, value, selected }: { id: string; label: string; value: string; selected?: boolean }) => {
  const ref = useRef<HTMLTextAreaElement>(null)
  useEffect(() => {
    if (selected) {
      ref.current?.focus()
      ref.current?.select()
    }
  }, [selected])
  return (
    <fieldset className="border border-[#dcdcdc] pr-[9px] pb-1.5 pl-[7px]">
      <legend className="pr-0.5 leading-4 whitespace-nowrap"><label htmlFor={id}><Song text={label} /></label></legend>
      <textarea
        ref={ref} id={id} defaultValue={value}
        className="block h-[41px] w-full resize-none border border-[#7a7a7a] bg-white px-px font-['Liberation_Mono',monospace] text-[10px] leading-4 outline-none selection:bg-[#0078d7] selection:text-white focus:border-[#567d9f]"
      />
    </fieldset>
  )
}

const GridDialog = () => (
  <div role="dialog" aria-label="定义网格" className="absolute top-[254px] left-[181px] w-[411px] border border-[#2e86e0] bg-[#f0f0f0] shadow-[0_2px_14px_rgba(0,0,0,0.45)]">
    <div className="flex h-[25px] items-center justify-between bg-white pr-[7px] pl-[3px]">
      <h2>定义网格</h2>
      <button type="button" aria-label="关闭"><X className="size-4" strokeWidth={1.5} /></button>
    </div>
    <div className="flex flex-col gap-[7px] px-[13px] pt-3.5 pb-[7px]">
      <Spacing id="horizontal" label="水平方向间距(mm)=>间距*个数,间距,间距*个数,间距,..." value="200,758,139" selected />
      <Spacing id="vertical" label="垂直方向间距(mm)=>间距*个数,间距,间距*个数,间距,..." value="1650,50" />
      <div className="mt-[5px] flex justify-end gap-3.5">
        <button type="button" className="h-6 w-[73px] border border-[#adadad] bg-[#e1e1e1]">确定</button>
        <button type="button" className="h-6 w-[73px] border border-[#adadad] bg-[#e1e1e1]">取消</button>
      </div>
    </div>
  </div>
)

const SogouBar = () => (
  <div className="absolute top-0 left-[867px] z-20 flex items-center text-[#2178c8]">
    <svg viewBox="0 0 28 28" className="size-7" aria-hidden="true"><path d="m1 5 20-4q3 0 4 3l3 17q0 3-3 3L9 27q-4 0-5-3L0 9q0-3 1-4" fill="#f15a24" /><path d="M20 7c-5-3-12-1-11 3s11 2 11 7c0 4-7 5-12 2" fill="none" stroke="#fff" strokeWidth="3.500" /></svg>
    <div className="flex h-6 w-[179px] items-center justify-between border border-l-0 border-[#a9c5e0] bg-white pr-1 pl-1.5">
      <span className="w-4 text-center text-[17px] font-semibold">A</span>
      <svg viewBox="0 0 14 14" className="size-3.5" aria-hidden="true"><circle cx="4" cy="4" r="2" fill="currentColor" /><path d="M9 8h3v2l-2 3H9l1-3H9z" fill="currentColor" /></svg>
      <FaRegSmile className="size-4" />
      <FaMicrophone className="size-3.5" />
      <FaKeyboard className="size-4" />
      <span className="flex items-end text-[#b6c4d6]"><FaUser className="size-3" /><span className="-ml-1.5 bg-[#b6c4d6] text-[7px] leading-2 font-bold text-white">19</span></span>
      <FaTshirt className="size-3.5" />
      <FaWrench className="size-3.5" />
    </div>
  </div>
)

const SpeedBall = () => (
  <div className="absolute top-[17px] left-[898px] z-10 flex items-center">
    <div className="z-10 flex size-12 shrink-0 items-center justify-center rounded-full border-2 border-[#e8e8e8] bg-gradient-to-b from-[#1b7a50] from-35% via-[#46c95a] via-40% to-[#4ed45f] text-[15px] text-white shadow-md">61%</div>
    <div className="-ml-6 flex h-[38px] w-[103px] items-center rounded-r-full bg-gradient-to-b from-[#c9c9c9] to-[#f2f2f2] pl-[28px] text-[10px] shadow-md">
      <svg viewBox="0 0 7 24" className="h-6 w-[7px]" aria-hidden="true"><path d="M3.500 9V2M.8 4.500 3.500 1.500l2.700 3" fill="none" stroke="#e5532d" strokeWidth="1.500" /><path d="M3.500 15v7M.8 19.500l2.700 3 2.700-3" fill="none" stroke="#219447" strokeWidth="1.500" /></svg>
      <span className="ml-5 flex flex-col leading-3.5"><span>0K/s</span><span>0K/s</span></span>
      <svg viewBox="0 0 22 22" className="ml-1 size-[22px] shrink-0" aria-hidden="true"><circle cx="10" cy="11" r="9" fill="#3780dc" /><path d="M10 7v8M6 11h8" stroke="#fff" strokeWidth="2" /><circle cx="16" cy="5" r="4.500" fill="#d93838" /></svg>
    </div>
  </div>
)

// Hand-drawn marks around the tab strip and the dialog title
const Marks = () => (
  <svg className="pointer-events-none absolute inset-0 z-30 size-full" aria-hidden="true">
    <g fill="none" stroke="#f00" strokeWidth="3">
      <ellipse cx="384" cy="163" rx="87" ry="59" />
      <ellipse cx="201" cy="248" rx="76" ry="35" />
    </g>
  </svg>
)

const StatusCell = ({ text, className }: { text: string; className: string }) => (
  <span className={clsx('h-[19px] overflow-hidden border border-[#d5d5d5] pl-px leading-[18px] whitespace-nowrap', className)}><Song text={text} /></span>
)

const StatusBar = () => (
  <footer className="mt-0.5 flex h-5 gap-0.5 bg-gradient-to-b from-[#fdfdfd] to-[#eee]">
    <StatusCell text="" className="w-[148px]" />
    <StatusCell text="层高:2.8m" className="w-[78px]" />
    <StatusCell text="底标高:13.07m" className="w-[98px]" />
    <StatusCell text="0" className="w-[47px]" />
    <StatusCell text="名称在当前层当前构件类型下不允许重名" className="grow" />
    <StatusCell text="896.4 FPS" className="w-[70px]" />
  </footer>
)

const APPS: { name: string; open?: boolean; active?: boolean; art: ReactNode }[] = [
  { name: '任务视图', art: <path d="M6.500 5.500h11v14h-11zM4.500 7.500H2v10h2.500M19.500 7.500H22v10h-2.500" fill="none" stroke="#fff" strokeWidth="1.200" /> },
  { name: '风扇', art: <><path d="M11 11C0 12 0 2 7 1c5 0 5 4 4 10M13 11c-1-11 9-11 10-4 0 5-4 5-10 4M13 13c11-1 11 9 4 10-5 0-5-4-4-10M11 13c1 11-9 11-10 4 0-5 4-5 10-4" fill="#f2f2f2" /><path d="M12 2q-5 5 0 10 5 5 0 10M2 12q5-5 10 0 5 5 10 0" fill="none" stroke="#020b0e" strokeWidth="1.200" /></> },
  { name: '浏览器', art: <><path d="M20 15c-2 6-14 7-15-2C4 3 20 2 20 13H8" fill="none" stroke="#eee" strokeWidth="3.500" /><path d="M4 21C-1 20 9 3 21 2" fill="none" stroke="#eee" strokeWidth="2" /></> },
  { name: '消息', art: <><path d="M17 9C12 2 3 6 3 13s8 10 13 5c4-5-1-9-4-7s-2 6 2 5M8 4C0 8 1 20 9 22" fill="none" stroke="#ddd" strokeWidth="1.800" /><path d="M14 9c2-2 1-8 5-9 5 0 4 7 6 9zM18 10h3v2h-3z" fill="#e7a900" /></> },
  { name: 'Edge', art: <path d="M2 11C4-1 22-2 22 11v3H9c0 6 8 6 12 3v5C15 26 4 23 4 15c0-5 3-7 5-7-1 1-1 2-1 3h8c0-7-10-7-14 0" fill="#0a7bdc" /> },
  { name: '应用商店', art: <><path d="M1 6h22v17H1z" fill="#fff" /><path d="M8 6c0-6 8-6 8 0" fill="none" stroke="#fff" strokeWidth="1.500" /><path d="M7 9h4.500v4.500H7z" fill="#f25022" /><path d="M12.500 9H17v4.500h-4.500z" fill="#7fba00" /><path d="M7 14.500h4.500V19H7z" fill="#00a4ef" /><path d="M12.500 14.500H17V19h-4.500z" fill="#ffb900" /></> },
  { name: '文件资源管理器', open: true, art: <><path d="M1 3h9l2 2h11v17H1z" fill="#efc55b" /><path d="M1 7h22v15H1z" fill="#fbe08d" /><path d="M4 22v-8h16v8h-4v-4H8v4z" fill="#3aa5e0" /></> },
  { name: 'Internet Explorer', art: <><path d="M20 16c-2 6-14 6-15-2C4 4 20 4 20 13H8" fill="none" stroke="#3fa9e8" strokeWidth="4" /><path d="M3 22C-3 19 10 3 21 2c3 0 1 4 0 6" fill="none" stroke="#f2c32e" strokeWidth="2" /></> },
  { name: '记事', open: true, art: <><rect x="1" y="1" width="22" height="22" rx="2" fill="#f29a1f" /><path d="M5 5h13v15H5z" fill="#fff5d9" /><path d="M7 9h7M7 12h5M7 15h6" stroke="#c97f17" /><path d="m11 17 1-4 8-9 2 2-8 9z" fill="#5b3a14" /></> },
  { name: '广联达', open: true, art: <path d="M21 1C9-1 1 5 1 13c1 10 14 13 20 6 3-3 2-6 1-9-3 1-6 1-10 1l2 4h4c-3 4-9 3-10-2C7 7 16 7 21 1" fill="#1b9bea" /> },
  { name: '360浏览器', open: true, art: <><circle cx="12" cy="12" r="11" fill="#3fb33c" /><path d="M19 15c-3 5-13 4-13-3 0-8 13-7 13 0H8" fill="none" stroke="#fff" strokeWidth="3" /><path d="M1 17C5 10 15 4 23 7" fill="none" stroke="#fff" strokeWidth="1.500" /></> },
  { name: '钢筋算量', open: true, active: true, art: <><rect width="24" height="24" rx="4" fill="#0a8cf0" /><path d="M13 5v12c0 3-4.500 3.300-7 .8M13 5c-2.300 0-3.500 1.300-3.500 3M4.500 12.500h13c3 0 3-4 0-4.500" fill="none" stroke="#fff" strokeWidth="1.800" /></> },
]

const Taskbar = () => (
  <div className="flex h-10 items-center bg-[#020b0e] text-white">
    <button type="button" aria-label="开始" className="flex h-full w-12 shrink-0 items-center justify-center bg-black">
      <svg viewBox="0 0 16 16" className="size-4"><path d="M0 2.200 7 1.200v6.300H0zM8 1l8-1v7.500H8zM0 8.500h7v6.300l-7-1zM8 8.500h8V16l-8-1z" fill="#fff" /></svg>
    </button>
    <label className="flex h-full w-[344px] shrink-0 items-center bg-[#333] pl-2">
      <svg viewBox="0 0 24 24" className="size-6"><circle cx="12" cy="12" r="9.500" fill="none" stroke="#fff" strokeWidth="2.500" /></svg>
      <input aria-label="搜索" placeholder="在这里输入你要搜索的内容" className="ml-1 grow text-sm placeholder:text-[#9a9a9a]" />
      <Mic className="mr-3 size-[18px] text-[#aaa]" strokeWidth={1.3} />
    </label>
    {APPS.map((app, i) => (
      <button
        key={app.name} type="button" aria-label={app.name}
        className={clsx('flex h-full shrink-0 flex-col items-center justify-between pt-2', i < 5 ? 'w-[50px]' : 'w-[47px]', app.active && 'bg-[#3a4245]')}
      >
        <svg viewBox="0 0 24 24" className="size-6 overflow-visible">{app.art}</svg>
        {app.open && <span className={clsx('h-0.5 bg-[#76b9ed]', app.active ? 'w-full' : 'w-[38px]')} />}
      </button>
    ))}
    <div className="ml-auto flex h-full items-center">
      <div className="mr-[18px] text-center leading-4">26%<br />CPU使用</div>
      <ChevronUp className="mr-2 size-4" strokeWidth={1.5} />
      <svg viewBox="0 0 18 16" className="mr-2 h-4 w-[18px]"><path d="M6 5.500h10v6H6zM17 7v3M2 2v3M5 2v3M1 5h5v3H1zM3.500 8v4H6" fill="none" stroke="#fff" strokeWidth="1.200" /><path d="M8 7h6v3H8z" fill="#fff" /></svg>
      <svg viewBox="0 0 16 16" className="mr-1.5 size-4"><path d="M2 14C2 8 7 3 14 3M5 14c0-4 4-8 9-8M8 14c0-3 3-5 6-5M11 14c0-1 1-2 3-2" fill="none" stroke="#aaa" strokeWidth="1.200" /></svg>
      <Volume2 className="mr-2 size-[18px]" strokeWidth={1.2} />
      <svg viewBox="0 0 24 14" className="mr-2.5 h-3.5 w-6"><path d="M.5 .5h23v13H.5zM3 4h18M3 7h18M6 10.500h12" fill="none" stroke="#fff" /><path d="M5 2v7M8 2v7M11 2v7M14 2v7M17 2v7M20 2v7" stroke="#020b0e" /></svg>
      <span className="mr-3.5 text-[17px]">A</span>
      <svg viewBox="0 0 16 16" className="mr-4 size-4"><rect width="16" height="16" rx="3" fill="#f4511e" /><path d="M12 4c-3-1.500-8-1-8 1.500S12 8 12 11s-6 2.500-8.500 1" fill="none" stroke="#fff" strokeWidth="2" /></svg>
      <div className="mr-3.5 text-center leading-[18px]">21:27<br />2017/12/1</div>
      <button type="button" className="flex h-full w-12 items-center bg-black pl-1.5">
        <svg viewBox="0 0 16 16" className="mb-1 size-4"><path d="M0 0h16v12H8l-3 3v-3H0z" fill="#fff" /><path d="M2 3.500h12M2 6.500h12M2 9.500h9" stroke="#000" /></svg>
        <span className="mt-3 -ml-2 flex size-5 items-center justify-center rounded-full border border-[#888] bg-[#333] text-[11px] font-bold">20</span>
      </button>
    </div>
  </div>
)

const App = () => (
  <div className="relative flex min-h-screen flex-col overflow-hidden bg-[#f0f0f0] font-['Noto_Sans','Noto_Sans_CJK_SC',sans-serif] text-xs text-black">
    <TitleBar />
    <MenuBar />
    <MainToolbar />
    <div className="flex grow pt-px">
      <Navigator />
      <main className="ml-1 flex min-w-0 grow flex-col">
        <ComponentToolbar />
        <div className="flex grow pl-0.5">
          <ComponentList />
          <SectionEditor />
          <div className="flex w-[52px] shrink-0 bg-[#f8f8f8] pt-6 pr-1">
            <div className="grow border border-[#a3a3a3] bg-white" />
          </div>
        </div>
      </main>
    </div>
    <StatusBar />
    <Taskbar />
    <SpeedBall />
    <SogouBar />
    <GridDialog />
    <Marks />
  </div>
)

export default App
